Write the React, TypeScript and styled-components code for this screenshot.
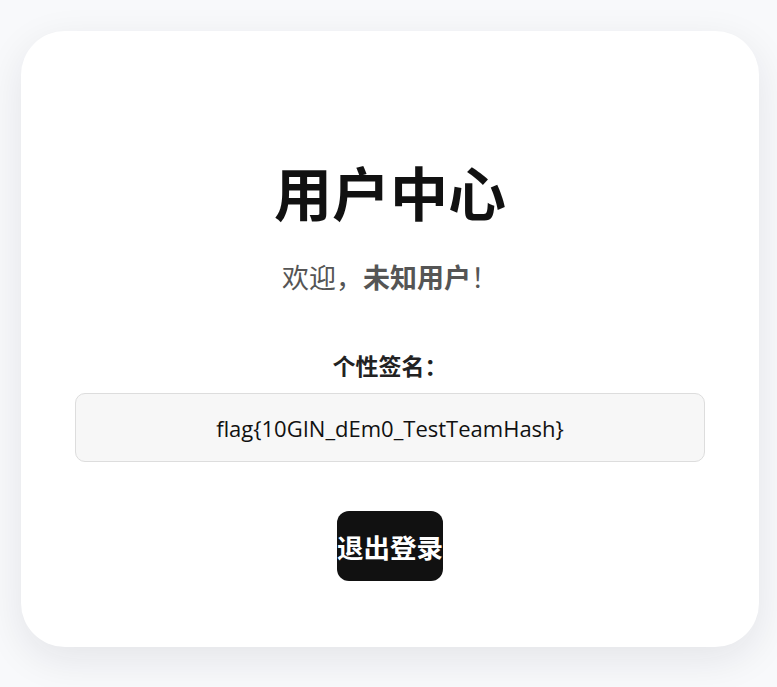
import styled, { createGlobalStyle } from "styled-components";

const GlobalStyle = createGlobalStyle`
  html, body {
    margin: 0;
    padding: 0;
    background: #f8f9fb;
  }
  body {
    font-family: "Open Sans", "Noto Sans CJK SC", sans-serif;
  }
`;

// Page wrapper
const Page = styled.div`
  padding: 31px 18px 40px 21px;
`;

// White card
const Card = styled.div`
  box-sizing: border-box;
  width: 738px;
  height: 616px;
  background: #ffffff;
  border-radius: 44px;
  box-shadow: 0 12px 40px rgba(20, 24, 40, 0.09);
  padding: 122px 54px 0;
  display: flex;
  flex-direction: column;
  align-items: center;
  text-align: center;
`;

const Title = styled.h1`
  margin: 0;
  font-family: "Noto Sans CJK SC", sans-serif;
  font-size: 58px;
  font-weight: 700;
  line-height: 76px;
  color: #111111;
`;

const Welcome = styled.p`
  margin: 30px 0 0;
  font-family: "Noto Sans CJK SC", sans-serif;
  font-size: 27px;
  line-height: 36px;
  color: #555555;

  strong {
    font-weight: 700;
  }
`;

const Label = styled.div`
  margin-top: 55px;
  font-family: "Noto Sans CJK SC", sans-serif;
  font-size: 23px;
  font-weight: 700;
  line-height: 30px;
  color: #222222;
`;

const SignatureBox = styled.div`
  box-sizing: border-box;
  margin-top: 13px;
  width: 100%;
  height: 69px;
  display: flex;
  align-items: center;
  justify-content: center;
  background: #f7f7f7;
  border: 1px solid #dddddd;
  border-radius: 10px;
  font-family: "Open Sans", "Noto Sans CJK SC", sans-serif;
  font-size: 22px;
  color: #111111;
`;

const LogoutButton = styled.button`
  margin-top: 49px;
  height: 70px;
  padding: 0;
  border: none;
  border-radius: 12px;
  background: #111111;
  color: #ffffff;
  font-family: "Noto Sans CJK SC", sans-serif;
  font-size: 26.5px;
  font-weight: 700;
  cursor: pointer;
`;

const App = () => {
  return (
    <>
      <GlobalStyle />
      <Page>
        <Card>
          <Title>用户中心</Title>
          <Welcome>
            欢迎，<strong>未知用户</strong>！
          </Welcome>
          <Label>个性签名：</Label>
          <SignatureBox>flag{"{"}10GIN_dEm0_TestTeamHash{"}"}</SignatureBox>
          <LogoutButton>退出登录</LogoutButton>
        </Card>
      </Page>
    </>
  );
};

export default App;
